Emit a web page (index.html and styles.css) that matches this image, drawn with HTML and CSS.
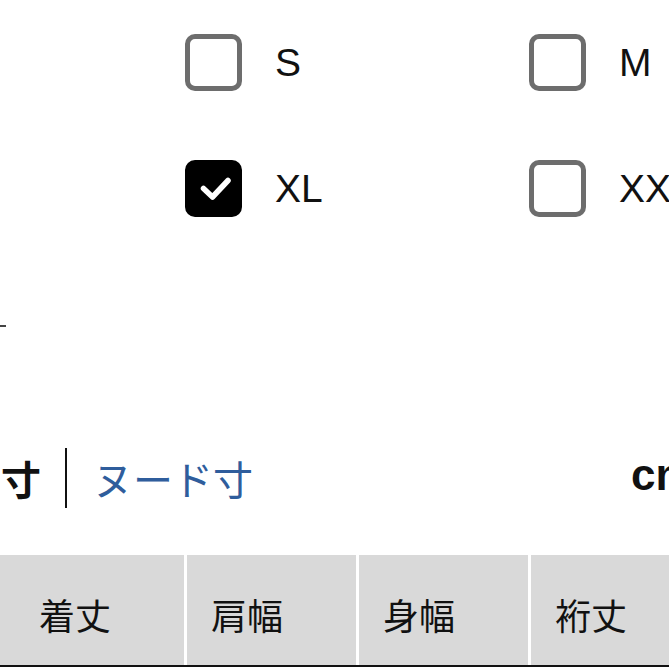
FILE: index.html
```html
<!DOCTYPE html>
<html lang="ja">
<head>
    <meta charset="UTF-8">
    <meta name="viewport" content="width=device-width, initial-scale=1.0">
    <title>サイズ選択</title>
    <link rel="stylesheet" href="styles.css">
</head>
<body>
    <div class="page">
        <div class="size-grid">
            <label class="size-option">
                <span class="checkbox"></span>
                <span class="size-label">S</span>
            </label>
            <label class="size-option">
                <span class="checkbox"></span>
                <span class="size-label">M</span>
            </label>
            <label class="size-option">
                <span class="checkbox checked">
                    <svg viewBox="0 0 47 47" width="47" height="47">
                        <polyline points="13.5,23.5 22.5,32 38,15.5" fill="none" stroke="#ffffff" stroke-width="5.5" stroke-linecap="round" stroke-linejoin="round"/>
                    </svg>
                </span>
                <span class="size-label">XL</span>
            </label>
            <label class="size-option">
                <span class="checkbox"></span>
                <span class="size-label">XXL</span>
            </label>
        </div>

        <div class="edge-mark"></div>

        <div class="tabs">
            <div class="tab-group">
                <span class="tab active">寸</span>
                <span class="tab-divider"></span>
                <span class="tab link">ヌード寸</span>
            </div>
            <span class="unit">cm</span>
        </div>

        <div class="table-head">
            <div class="cell"></div>
            <div class="cell">着丈</div>
            <div class="cell">肩幅</div>
            <div class="cell">身幅</div>
            <div class="cell">裄丈</div>
        </div>
    </div>
</body>
</html>
```

FILE: styles.css
```css
* {
    margin: 0;
    padding: 0;
    box-sizing: border-box;
}

body {
    font-family: 'Liberation Sans', 'Noto Sans CJK JP', sans-serif;
    background: #ffffff;
    color: #111111;
    width: 669px;
    height: 669px;
    overflow: hidden;
}

.page {
    width: 669px;
}

.size-grid {
    display: grid;
    grid-template-columns: 344px 344px;
    row-gap: 69px;
    padding-top: 34px;
    padding-left: 185px;
}

.size-option {
    display: flex;
    align-items: center;
    gap: 33px;
    white-space: nowrap;
}

.checkbox {
    width: 57px;
    height: 57px;
    flex-shrink: 0;
    border: 5px solid #6d6d6d;
    border-radius: 10px;
    background: #ffffff;
    display: flex;
}

.checkbox.checked {
    background: #000000;
    border-color: #000000;
}

.size-label {
    font-size: 39px;
    font-weight: 400;
    color: #111111;
    line-height: 1;
}

.edge-mark {
    width: 6px;
    height: 2px;
    background: #444444;
    margin-top: 108px;
}

.tabs {
    display: flex;
    align-items: center;
    justify-content: space-between;
    height: 60px;
    margin-top: 121px;
}

.tab-group {
    display: flex;
    align-items: center;
    height: 100%;
}

.tab {
    font-family: 'Noto Sans CJK JP', sans-serif;
    font-size: 40px;
    line-height: 1;
}

.tab.active {
    font-weight: 700;
    color: #111111;
    margin-left: 1px;
}

.tab-divider {
    width: 2px;
    height: 60px;
    background: #111111;
    margin: 0 26px 0 24px;
}

.tab.link {
    color: #2f5d9c;
    font-weight: 400;
}

.unit {
    font-size: 44px;
    font-weight: 700;
    color: #111111;
    line-height: 1;
    margin-right: -30px;
    width: 68px;
    padding-bottom: 6px;
}

.table-head {
    display: grid;
    grid-template-columns: 12px repeat(4, 169px);
    column-gap: 3px;
    height: 112px;
    margin-top: 47px;
    border-bottom: 2px solid #111111;
    background: #ffffff;
}

.cell {
    background: #d9d9d9;
    font-family: 'Noto Sans CJK JP', sans-serif;
    font-size: 36px;
    color: #111111;
    display: flex;
    align-items: center;
    padding-left: 24px;
    padding-top: 8px;
    white-space: nowrap;
}
```
